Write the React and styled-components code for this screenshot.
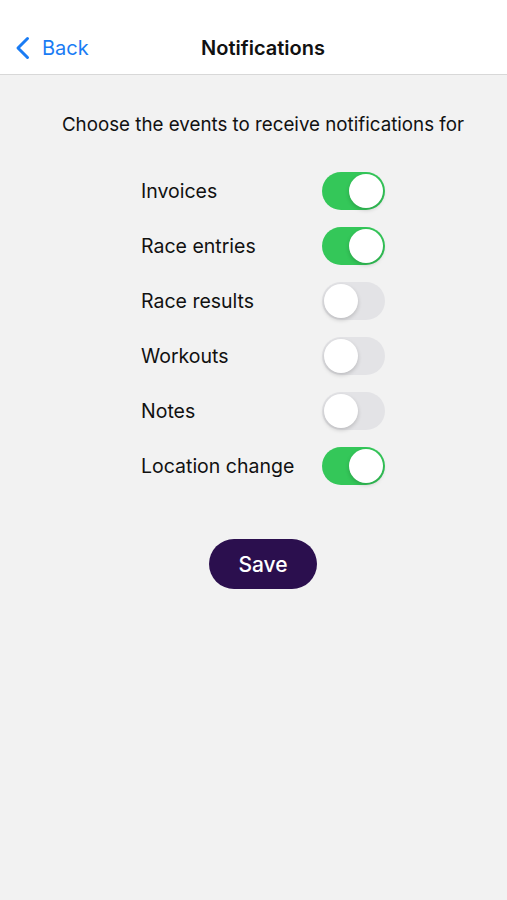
import React, { useState } from 'react';
import styled, { createGlobalStyle } from 'styled-components';

const Global = createGlobalStyle`
    html, body {
        margin: 0;
        padding: 0;
        background: #f2f2f2;
    }
    body {
        font-family: Inter, "Liberation Sans", Arial, sans-serif;
        -webkit-font-smoothing: antialiased;
    }
`;

const EVENTS = [
    { label: 'Invoices', on: true },
    { label: 'Race entries', on: true },
    { label: 'Race results', on: false },
    { label: 'Workouts', on: false },
    { label: 'Notes', on: false },
    { label: 'Location change', on: true },
];

export default function App() {
    const [state, setState] = useState(EVENTS.map(e => e.on));

    const flip = (i) => setState(s => s.map((v, j) => (j === i ? !v : v)));

    return (
        <Page>
            <Global />
            <NavBar>
                <BackButton>
                    <svg width="16" height="24" viewBox="0 0 16 24" fill="none">
                        <path d="M12.5 2.5L3 12l9.5 9.5" stroke="#1a7cf4" strokeWidth="3" strokeLinecap="round" strokeLinejoin="round" />
                    </svg>
                    <span>Back</span>
                </BackButton>
                <Title>Notifications</Title>
            </NavBar>

            <Content>
                <Intro>Choose the events to receive notifications for</Intro>
                <List>
                    {EVENTS.map((e, i) => (
                        <Row key={e.label}>
                            <Label>{e.label}</Label>
                            <Switch $on={state[i]} onClick={() => flip(i)} aria-pressed={state[i]}>
                                <Knob $on={state[i]} />
                            </Switch>
                        </Row>
                    ))}
                </List>
                <SaveButton>Save</SaveButton>
            </Content>
        </Page>
    );
}

const Page = styled.div`
    min-height: 900px;
    background: #f2f2f2;
`;

const NavBar = styled.div`
    position: relative;
    height: 75px;
    background: #fff;
    border-bottom: 1px solid #d8d8d8;
    display: flex;
    align-items: center;
    justify-content: center;
    padding-left: 19px;
    box-sizing: border-box;
`;

const BackButton = styled.div`
    position: absolute;
    left: 15px;
    top: 36px;
    display: flex;
    align-items: center;
    gap: 11px;
    color: #1a7cf4;
    font-size: 20px;

    & > span {
        line-height: 24px;
    }
`;

const Title = styled.div`
    font-size: 20px;
    font-weight: 600;
    color: #111;
    margin-top: 22px;
`;

const Content = styled.div`
    display: flex;
    flex-direction: column;
    align-items: center;
    padding-top: 38px;
    padding-left: 19px;
`;

const Intro = styled.div`
    font-size: 18.75px;
    color: #111;
    margin-bottom: 36px;
`;

const List = styled.div`
    display: flex;
    flex-direction: column;
    gap: 17px;
    width: 244px;
`;

const Row = styled.div`
    display: flex;
    align-items: center;
    justify-content: space-between;
    height: 38px;
`;

const Label = styled.div`
    font-size: 19.5px;
    color: #111;
`;

const Switch = styled.div`
    position: relative;
    width: 63px;
    height: 38px;
    border-radius: 19px;
    background: ${p => (p.$on ? '#34c759' : '#e3e3e6')};
    cursor: pointer;
`;

const Knob = styled.div`
    position: absolute;
    top: 2px;
    left: ${p => (p.$on ? '27px' : '2px')};
    width: 34px;
    height: 34px;
    border-radius: 50%;
    background: #fff;
    box-shadow: 0 2px 4px rgba(0, 0, 0, 0.18);
`;

const SaveButton = styled.button`
    margin-top: 54px;
    width: 108px;
    height: 50px;
    border: none;
    border-radius: 25px;
    background: #2b0f4e;
    color: #fff;
    font-family: inherit;
    font-size: 21px;
    font-weight: 500;
`;
